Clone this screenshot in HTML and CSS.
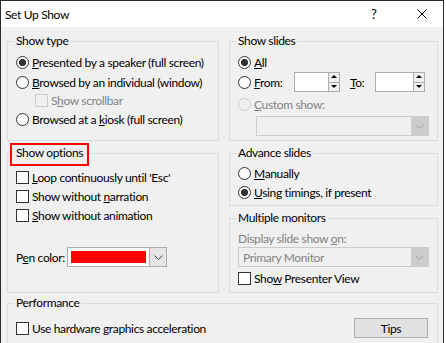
FILE: index.html
```html
<!DOCTYPE html>
<html>
<head>
<meta charset="utf-8">
<link rel="stylesheet" href="styles.css">
</head>
<body>
<div class="window">
  <div class="titlebar">
    <span class="title">Set Up Show</span>
    <span class="help">?</span>
    <svg class="close" width="10" height="10" viewBox="0 0 10 10"><path d="M0.5 0.5L9.5 9.5M9.5 0.5L0.5 9.5" stroke="#000" stroke-width="1" fill="none"/></svg>
  </div>
  <div class="content">
    <fieldset class="group g-type">
      <legend>Show type</legend>
      <div class="row"><span class="radio on"></span><span><u>P</u>resented by a speaker (full screen)</span></div>
      <div class="row"><span class="radio"></span><span><u>B</u>rowsed by an individual (window)</span></div>
      <div class="row sub"><span class="check disabled"></span><span class="dis">S<u>h</u>ow scrollbar</span></div>
      <div class="row"><span class="radio"></span><span>Browsed at a <u>k</u>iosk (full screen)</span></div>
    </fieldset>

    <fieldset class="group g-slides">
      <legend>Show slides</legend>
      <div class="row"><span class="radio on"></span><span><u>A</u>ll</span></div>
      <div class="row"><span class="radio"></span><span class="lbl-from"><u>F</u>rom:</span>
        <span class="spin w1"><span class="spin-field"></span><span class="spin-btns"><span class="sb up"></span><span class="sb down"></span></span></span>
        <span class="lbl-to"><u>T</u>o:</span>
        <span class="spin w2"><span class="spin-field"></span><span class="spin-btns"><span class="sb up"></span><span class="sb down"></span></span></span>
      </div>
      <div class="row r-custom"><span class="radio disabled"></span><span class="dis"><u>C</u>ustom show:</span></div>
      <div class="combo disabled c-custom"><span class="combo-field"></span><span class="combo-btn"><svg width="9" height="5" viewBox="0 0 9 5"><path d="M0.5 0.5L4.5 4.5L8.5 0.5" stroke="#a0a0a0" fill="none"/></svg></span></div>
    </fieldset>

    <fieldset class="group g-options">
      <legend class="marked">Show options</legend>
      <div class="row"><span class="check"></span><span><u>L</u>oop continuously until 'Esc'</span></div>
      <div class="row"><span class="check"></span><span>Show without <u>n</u>arration</span></div>
      <div class="row"><span class="check"></span><span><u>S</u>how without animation</span></div>
      <div class="row pen"><span class="pen-lbl">P<u>e</u>n color:</span>
        <span class="combo pen-combo"><span class="combo-field"><span class="swatch"></span></span><span class="combo-btn"><svg width="9" height="5" viewBox="0 0 9 5"><path d="M0.5 0.5L4.5 4.5L8.5 0.5" stroke="#444" fill="none"/></svg></span></span>
      </div>
    </fieldset>

    <div class="rightcol">
      <fieldset class="group g-advance">
        <legend>Advance slides</legend>
        <div class="row"><span class="radio"></span><span><u>M</u>anually</span></div>
        <div class="row"><span class="radio on"></span><span><u>U</u>sing timings, if present</span></div>
      </fieldset>
      <fieldset class="group g-monitors">
        <legend>Multiple monitors</legend>
        <div class="row r-display"><span class="dis">Display slide show <u>o</u>n:</span></div>
        <div class="combo disabled c-monitor"><span class="combo-field">Primary Monitor</span><span class="combo-btn"><svg width="9" height="5" viewBox="0 0 9 5"><path d="M0.5 0.5L4.5 4.5L8.5 0.5" stroke="#a0a0a0" fill="none"/></svg></span></div>
        <div class="row r-presenter"><span class="check"></span><span>Sho<u>w</u> Presenter View</span></div>
      </fieldset>
    </div>

    <fieldset class="group g-perf">
      <legend>Performance</legend>
      <div class="row perf-row"><span class="check"></span><span class="grow">Use hardware <u>g</u>raphics acceleration</span><span class="btn">Tips</span></div>
    </fieldset>
  </div>
</div>
</body>
</html>
```

FILE: styles.css
```css
* { box-sizing: border-box; }
html, body { margin: 0; padding: 0; background: #fff; }
body {
  font-family: Lato, "Segoe UI", "Liberation Sans", sans-serif;
  font-size: 12px;
  letter-spacing: -0.35px;
  color: #000;
  width: 446px;
  height: 343px;
  overflow: hidden;
}
u { text-underline-offset: 1px; }

.window {
  width: 444px;
  height: 360px;
  border: 1px solid #2b2b2b;
  background: #f0f0f0;
  display: flex;
  flex-direction: column;
}
.titlebar {
  height: 26px;
  flex: none;
  background: #fff;
  display: flex;
  align-items: center;
  padding-left: 4px;
}
.title { flex: 1; font-size: 12px; }
.help { width: 8px; margin-right: 38px; font-size: 13px; }
.close { margin-right: 16px; }

.content {
  padding: 6px 5px 0 6px;
  display: grid;
  grid-template-columns: 212px 209px;
  column-gap: 10px;
  row-gap: 4px;
}
.group {
  margin: 0;
  min-width: 0;
  border: 1px solid #dcdcdc;
  padding: 3px 8px 3px 8px;
}
legend {
  padding: 0 2px;
  margin-left: -2px;
  height: 16px;
  line-height: 16px;
}

.row { display: flex; align-items: center; height: 20px; white-space: nowrap; }
.row > * { flex: none; }
.radio {
  width: 13px; height: 13px;
  border-radius: 50%;
  border: 1px solid #333;
  background: #fff;
  margin-right: 3px;
}
.radio.on { background: radial-gradient(circle at center, #333 0 3.3px, #fff 3.9px); }
.radio.disabled { border-color: #cccccc; background: #f0f0f0; }
.check {
  width: 13px; height: 13px;
  border: 1px solid #333;
  background: #fff;
  margin-right: 3px;
}
.check.disabled { border-color: #cccccc; background: #f0f0f0; }
.dis { color: #838383; }

/* Show type */
.g-type .sub { height: 17px; padding-left: 19px; }

/* Show slides */
.g-slides { padding-bottom: 4px; }
.lbl-from { width: 40px; }
.lbl-to { width: 25px; margin-left: 10px; }
.spin {
  display: flex;
  height: 20px;
  border: 1px solid #adadad;
  background: #fff;
}
.spin.w1 { width: 46px; }
.spin.w2 { width: 50px; }
.spin-field { flex: 1; }
.spin-btns {
  width: 11px;
  display: flex;
  flex-direction: column;
  border-left: 1px solid #adadad;
  background: #f0f0f0;
}
.sb { flex: 1; position: relative; }
.sb.up { border-bottom: 1px solid #adadad; }
.sb::after {
  content: "";
  position: absolute;
  left: 2px; top: 2px;
  border-left: 3px solid transparent;
  border-right: 3px solid transparent;
}
.sb.up::after { border-bottom: 3px solid #000; }
.sb.down::after { border-top: 3px solid #000; }
.r-custom { margin-top: 2px; }

.combo {
  display: flex;
  height: 20px;
  border: 1px solid #adadad;
  background: #fff;
}
.combo-field { flex: 1; display: flex; align-items: center; padding-left: 3px; }
.combo-btn {
  width: 17px;
  display: flex;
  align-items: center;
  justify-content: center;
  background: #e5e5e5;
  border-left: 1px solid #adadad;
}
.combo.disabled { border-color: #cccccc; background: #f0f0f0; }
.combo.disabled .combo-btn { background: #cccccc; border-left: none; }
.c-custom { margin: 2px 0 0 18px; }

/* Show options */
.g-options { padding-top: 7px; }
.g-options .row { height: 19px; }
.marked { position: relative; }
.marked::after {
  content: "";
  position: absolute;
  left: -4px; right: -4px; top: -2px; bottom: -5px;
  border: 2px solid #ff0000;
}
.pen { margin-top: 22px; height: 20px !important; }
.pen-lbl { width: 51px; }
.pen-combo { width: 100px; }
.pen-combo .combo-field { padding: 3px; }
.swatch { display: block; width: 100%; height: 100%; background: #ff0000; }

/* right column */
.rightcol { display: flex; flex-direction: column; gap: 4px; }
.g-advance .row { height: 19px; }
.g-monitors { flex: 1; padding-bottom: 4px; }
.r-display { height: 18px; }
.c-monitor { color: #838383; border-color: #b9c9da; background: #e8e8e8; }
.c-monitor .combo-field { padding-left: 4px; }
.r-presenter { margin-top: 1px; }

/* performance */
.g-perf { grid-column: 1 / span 2; margin-top: -2px; padding: 7px 9px 8px 8px; }
.grow { flex: 1 !important; }
.btn {
  width: 74px;
  height: 20px;
  border: 1px solid #adadad;
  background: #e1e1e1;
  display: flex;
  align-items: center;
  justify-content: center;
}
```
